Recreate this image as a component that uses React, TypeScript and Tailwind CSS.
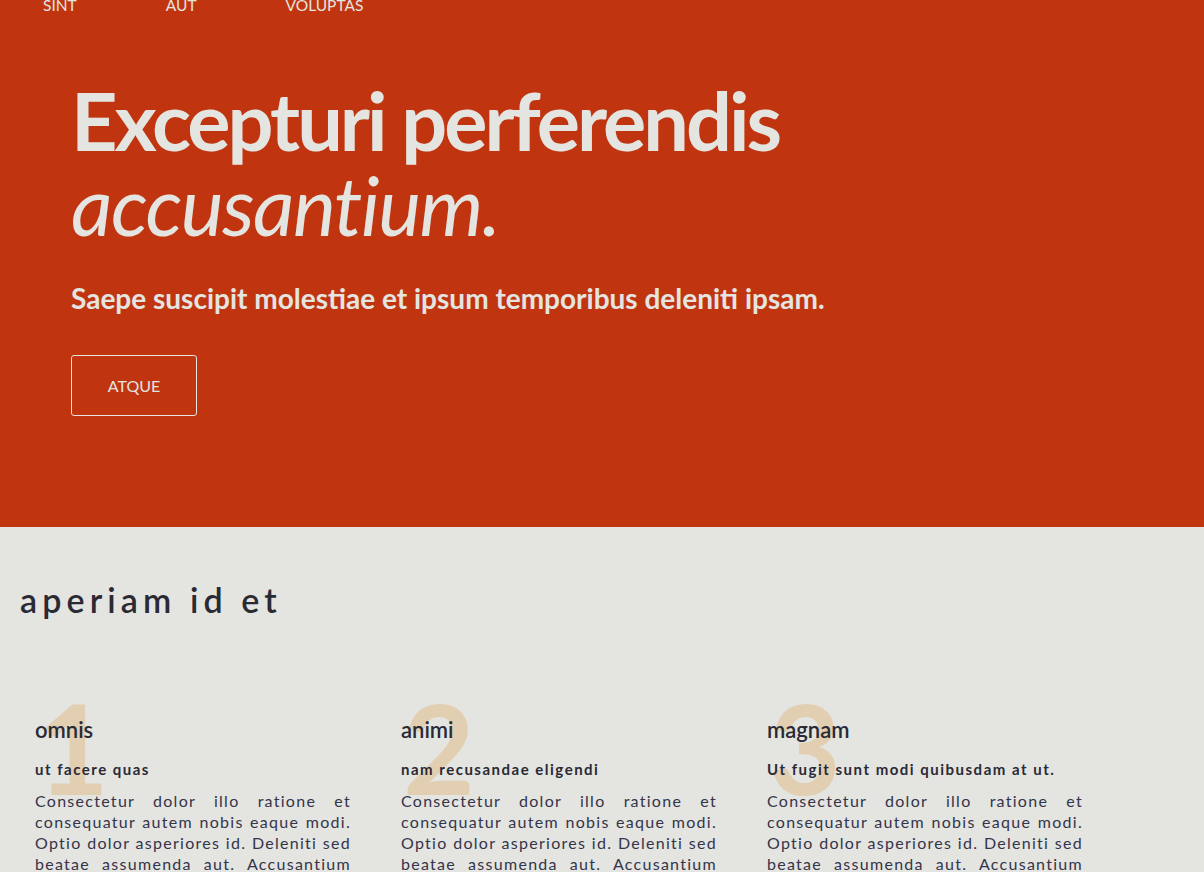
import React from 'react';

export default function App() {
  const navItems = ['Sint', 'Aut', 'Voluptas'];

  const steps = [
    { num: '1', title: 'omnis', subtitle: 'ut facere quas' },
    { num: '2', title: 'animi', subtitle: 'nam recusandae eligendi' },
    { num: '3', title: 'magnam', subtitle: 'Ut fugit sunt modi quibusdam at ut.' },
  ];

  const body =
    'Consectetur dolor illo ratione et consequatur autem nobis eaque modi. Optio dolor asperiores id. Deleniti sed beatae assumenda aut. Accusantium quia dolores et voluptas.';

  return (
    <div className="min-h-screen bg-[#e4e4e0] font-['Lato',sans-serif] overflow-hidden">
      {/* Hero */}
      <div className="bg-[#c0350f] text-[#e4e4e0] h-[532px] -mt-[5px]">
        <nav className="flex gap-[89px] pl-[43px] h-[20px] text-[15.5px] uppercase leading-[20px]">
          {navItems.map((item) => (
            <a key={item} href="#" className="text-[#e4e4e0]">
              {item}
            </a>
          ))}
        </nav>
        <div className="pl-[71px] pt-[62px]">
          <h1 className="text-[81px] leading-[85px] font-bold">
            <span className="tracking-[-3px]">Excepturi perferendis</span>
            <br />
            <em className="font-normal tracking-[-1.5px]">accusantium.</em>
          </h1>
          <p className="mt-[33px] text-[28px] font-bold leading-[36px]">
            Saepe suscipit molestiae et ipsum temporibus deleniti ipsam.
          </p>
          <button className="mt-[39px] w-[126px] h-[61px] border border-[#e4e4e0] rounded-[3px] text-[16px] uppercase">
            Atque
          </button>
        </div>
      </div>

      {/* Steps */}
      <div className="text-[#2a2a35]">
        <h2 className="pl-[20px] pt-[53px] text-[34px] font-semibold tracking-[0.15em] leading-[40px]">
          aperiam id et
        </h2>
        <div className="flex gap-[50px] pl-[35px] pt-[95px]">
          {steps.map((s) => (
            <div key={s.num} className="relative w-[316px]">
              <span className="absolute left-[2px] -top-[30px] text-[124px] font-bold leading-none text-[#e2cfb2] select-none">
                {s.num}
              </span>
              <div className="relative">
                <h3 className="text-[22px] font-semibold leading-[30px]">{s.title}</h3>
                <h4 className="mt-[13px] text-[15px] font-bold tracking-[0.1em]">{s.subtitle}</h4>
                <p className="mt-[9px] text-[16px] leading-[21px] tracking-[0.08em] text-justify text-[#34344a]">
                  {body}
                </p>
              </div>
            </div>
          ))}
        </div>
      </div>
    </div>
  );
}
